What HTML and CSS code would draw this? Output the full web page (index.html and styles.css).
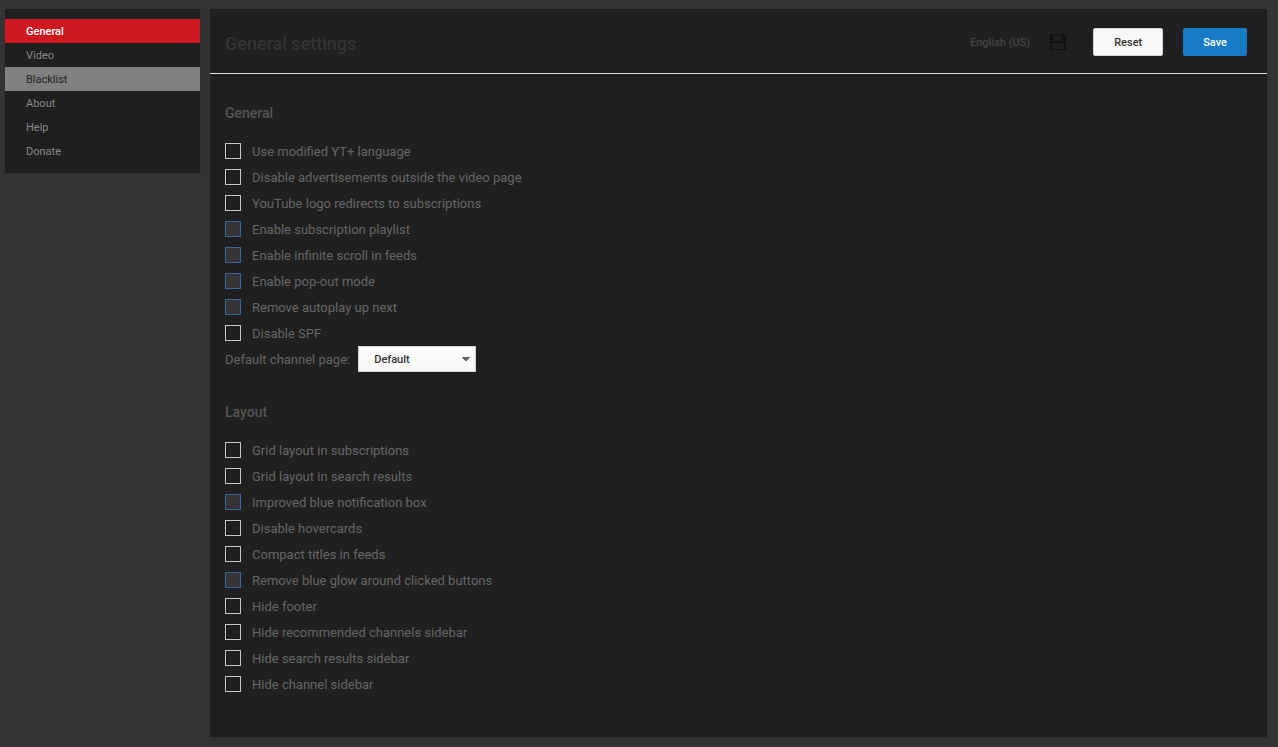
FILE: index.html
```
<!DOCTYPE html>
<html lang="en">
<head>
  <meta charset="UTF-8">
  <title>General settings</title>
  <link rel="stylesheet" href="styles.css">
</head>
<body>

  <nav class="sidebar">
    <a href="#general" class="active">General</a>
    <a href="#video">Video</a>
    <a href="#blacklist" class="hover">Blacklist</a>
    <a href="#about">About</a>
    <a href="#help">Help</a>
    <a href="#donate">Donate</a>
  </nav>

  <form class="panel" id="settings">
    <header class="header">
      <h1>General settings</h1>
      <div class="actions">
        <a href="#language" class="language">English (US)</a>
        <button type="button" class="icon-button" aria-label="Import or export settings">
          <svg width="16" height="16" viewBox="0 0 16 16">
            <path fill="#111" fill-rule="evenodd" d="M0 0h14l2 2v14H0zM3 1v6h9V1zM10 2h1v4h-1zM2 9v6h12V9z"/>
          </svg>
        </button>
        <button type="reset" class="button reset">Reset</button>
        <button type="submit" class="button save">Save</button>
      </div>
    </header>

    <div class="content">
      <section>
        <h2>General</h2>
        <label class="option"><input type="checkbox" name="yt_language">Use modified YT+ language</label>
        <label class="option"><input type="checkbox" name="outside_ads">Disable advertisements outside the video page</label>
        <label class="option"><input type="checkbox" name="logo_redirect">YouTube logo redirects to subscriptions</label>
        <label class="option"><input type="checkbox" name="sub_playlist" checked>Enable subscription playlist</label>
        <label class="option"><input type="checkbox" name="infinite_scroll" checked>Enable infinite scroll in feeds</label>
        <label class="option"><input type="checkbox" name="popout" checked>Enable pop-out mode</label>
        <label class="option"><input type="checkbox" name="no_autoplay" checked>Remove autoplay up next</label>
        <label class="option"><input type="checkbox" name="disable_spf">Disable SPF</label>
        <div class="option">
          <label for="channelPage">Default channel page:</label>
          <select id="channelPage" name="channel_page">
            <option>Default</option>
            <option>Videos</option>
            <option>Playlists</option>
            <option>Channels</option>
            <option>Discussion</option>
            <option>About</option>
          </select>
        </div>
      </section>

      <section>
        <h2>Layout</h2>
        <label class="option"><input type="checkbox" name="grid_subs">Grid layout in subscriptions</label>
        <label class="option"><input type="checkbox" name="grid_search">Grid layout in search results</label>
        <label class="option"><input type="checkbox" name="blue_box" checked>Improved blue notification box</label>
        <label class="option"><input type="checkbox" name="hovercards">Disable hovercards</label>
        <label class="option"><input type="checkbox" name="compact_titles">Compact titles in feeds</label>
        <label class="option"><input type="checkbox" name="blue_glow" checked>Remove blue glow around clicked buttons</label>
        <label class="option"><input type="checkbox" name="hide_footer">Hide footer</label>
        <label class="option"><input type="checkbox" name="hide_recommended">Hide recommended channels sidebar</label>
        <label class="option"><input type="checkbox" name="hide_search_sidebar">Hide search results sidebar</label>
        <label class="option"><input type="checkbox" name="hide_channel_sidebar">Hide channel sidebar</label>
      </section>
    </div>
  </form>

</body>
</html>
```
FILE: styles.css
```
* {
  box-sizing: border-box;
}
body {
  display: flex;
  align-items: flex-start;
  gap: 10px;
  margin: 0;
  padding: 9px 11px 10px 5px;
  background: #333;
  color: #666;
  font-family: Roboto, sans-serif;
  font-size: 13px;
}
a {
  text-decoration: none;
}
.sidebar,
.panel {
  background: #1f1f1f;
  box-shadow: 0 1px 2px rgba(0,0,0,0.1);
}

/* left menu */
.sidebar {
  flex: none;
  width: 195px;
  padding: 10px 0;
}
.sidebar a {
  display: block;
  height: 24px;
  padding: 0 21px;
  color: #888;
  font-size: 11px;
  line-height: 26px;
}
.sidebar .active {
  background: #cc181e;
  color: #fff;
  font-weight: 500;
}
.sidebar .hover,
.sidebar a:not(.active):hover {
  background: #808080;
  color: #222;
}

/* top bar */
.panel {
  flex: 1;
}
.header {
  display: flex;
  align-items: flex-start;
  justify-content: space-between;
  padding: 19px 20px 13px 15px;
  border-bottom: 1px solid #e2e2e2;
}
h1 {
  margin: 0;
  color: #333;
  font-size: 18px;
  font-weight: 500;
  line-height: 32px;
}
.actions {
  display: flex;
  align-items: center;
  gap: 20px;
}
.language {
  color: #444;
  font-size: 11px;
  font-weight: 500;
}
.icon-button {
  display: flex;
  margin-right: 7px;
  padding: 0;
  border: 0;
  background: none;
  cursor: pointer;
}
.button {
  height: 28px;
  padding: 0 20px;
  border: 1px solid #d3d3d3;
  border-radius: 2px;
  font: 500 11px Roboto, sans-serif;
  cursor: pointer;
}
.reset {
  background: #f8f8f8;
  color: #333;
}
.save {
  border: 0;
  background: #167ac6;
  color: #fff;
}

/* options */
.content {
  padding: 29px 15px 40px;
}
section + section {
  margin-top: 30px;
}
h2 {
  margin: 0 0 15px;
  color: #555;
  font-size: 14px;
  font-weight: 500;
  line-height: 20px;
}
.option {
  display: flex;
  align-items: center;
  width: fit-content;
  height: 26px;
}
input {
  appearance: none;
  width: 16px;
  height: 16px;
  margin: 0 11px 0 0;
  border: 1px solid #c6c6c6;
}
input:checked {
  border-color: #36649c;
  background: #333;
}
select {
  appearance: none;
  width: 118px;
  height: 26px;
  margin-left: 8px;
  padding: 0 15px;
  border: 1px solid #d3d3d3;
  border-radius: 0;
  background:
    linear-gradient(45deg, transparent 50%, #666 50%) right 9px center / 4px 4px no-repeat,
    linear-gradient(-45deg, transparent 50%, #666 50%) right 5px center / 4px 4px no-repeat,
    linear-gradient(#fcfcfc, #f8f8f8);
  color: #333;
  font: 500 11px Roboto, sans-serif;
}
```
